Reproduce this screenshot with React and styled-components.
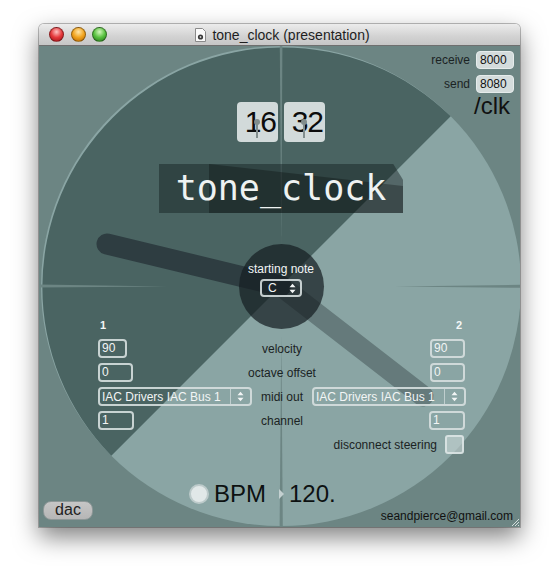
import React from "react";
import styled, { createGlobalStyle } from "styled-components";

const GlobalStyle = createGlobalStyle`
  body {
    margin: 0;
    background: #ffffff;
    font-family: "Liberation Sans", Arial, sans-serif;
  }
`;

const Page = styled.div`
  width: 560px;
  height: 582px;
  padding: 24px 0 0 39px;
  box-sizing: border-box;
  background: #ffffff;
`;

const Window = styled.div`
  width: 481px;
  border-radius: 5px 5px 0 0;
  overflow: hidden;
  box-shadow: 0 10px 24px rgba(0, 0, 0, 0.5), 0 0 0 1px rgba(0, 0, 0, 0.25);
`;

const TitleBar = styled.div`
  height: 21px;
  display: grid;
  grid-template-columns: 1fr auto 1fr;
  align-items: center;
  background: linear-gradient(#ececec, #d2d2d2 60%, #c6c6c6);
  border-bottom: 1px solid #6f6f6f;
`;

const Lights = styled.div`
  display: flex;
  gap: 6.5px;
  padding-left: 10px;
`;

const lightColors = {
  red: ["#ffc2c2", "#e5383b", "#9c1016"],
  orange: ["#ffe6a8", "#f2a41e", "#b36400"],
  green: ["#d4f7bd", "#58c23f", "#25701a"],
};

const Light = styled.span`
  width: 13px;
  height: 13px;
  border-radius: 50%;
  border: 0.5px solid rgba(0, 0, 0, 0.35);
  background: ${(p) =>
    `radial-gradient(circle at 50% 30%, ${lightColors[p.$c][0]} 0%, ${lightColors[p.$c][1]} 50%, ${lightColors[p.$c][2]} 100%)`};
`;

const WindowTitle = styled.div`
  display: flex;
  align-items: center;
  gap: 6px;
  margin-left: 6px;
  font-size: 14px;
  color: #1e1e1e;
`;

const Canvas = styled.div`
  position: relative;
  height: 481px;
  background: #6c8583;
  overflow: hidden;
`;

const Face = styled.svg`
  position: absolute;
  inset: 0;
`;

const Layer = styled.div`
  position: relative;
  height: 100%;
  display: flex;
  flex-direction: column;
  font-size: 12px;
  color: #1b2323;
`;

const Header = styled.div`
  display: grid;
  grid-template-columns: 1fr auto 1fr;
  padding: 5px 6px 0 6px;
`;

const Numbers = styled.div`
  grid-column: 2;
  display: flex;
  gap: 6px;
  margin: 51px 0 0 3px;
`;

const NumberBox = styled.div`
  position: relative;
  width: 41px;
  height: 40px;
  box-sizing: border-box;
  padding-right: 2px;
  border-radius: 4px;
  background: #d2dada;
  text-align: right;
  font-size: 30px;
  letter-spacing: -1px;
  line-height: 40px;
  color: #0c0c0c;
`;

const Pin = styled.span`
  position: absolute;
  left: 19px;
  top: 18px;
  width: 2px;
  height: 18px;
  background: #818d8d;
  &::before {
    content: "";
    position: absolute;
    left: -2px;
    top: -1px;
    width: 6px;
    height: 6px;
    border-radius: 50%;
    background: #818d8d;
  }
`;

const Remote = styled.div`
  grid-column: 3;
  justify-self: end;
  display: flex;
  flex-direction: column;
  align-items: flex-end;
  gap: 6px;
`;

const RemoteRow = styled.div`
  display: flex;
  align-items: center;
  gap: 6px;
`;

const PortField = styled.div`
  width: 38px;
  height: 18px;
  box-sizing: border-box;
  padding-left: 3px;
  border: 1px solid #e6ecec;
  border-radius: 4px;
  background: #d4dcdc;
  line-height: 16px;
  color: #111;
`;

const Address = styled.div`
  margin: -5px 4px 0 0;
  font-size: 24px;
  line-height: 24px;
  color: #111;
`;

const TitlePanel = styled.div`
  position: relative;
  align-self: center;
  margin: 22px 0 0 3px;
  width: 244px;
  height: 49px;
  background: rgba(18, 28, 30, 0.45);
  clip-path: polygon(0 0, 96% 0, 100% 32%, 100% 100%, 0 100%);
  &::before {
    content: "";
    position: absolute;
    left: 50px;
    right: 0;
    top: 0;
    bottom: 0;
    background: rgba(0, 0, 0, 0.28);
    clip-path: polygon(0 0, 100% 45%, 100% 100%, 0 100%);
  }
`;

const TitleText = styled.div`
  position: relative;
  font-family: "DejaVu Sans Mono", "Liberation Mono", monospace;
  font-size: 35px;
  line-height: 49px;
  text-align: center;
  color: #eef2f2;
`;

const NoteBlock = styled.div`
  align-self: center;
  margin: 49px 0 0 3px;
  display: flex;
  flex-direction: column;
  align-items: center;
  gap: 3px;
  color: #f2f5f5;
  line-height: 14px;
`;

const Select = styled.div`
  display: flex;
  align-items: center;
  justify-content: space-between;
  width: ${(p) => p.$w}px;
  height: ${(p) => p.$h}px;
  box-sizing: border-box;
  padding-left: ${(p) => (p.$compact ? 6 : 2)}px;
  border: 2px solid rgba(214, 223, 223, 0.9);
  border-radius: 4px;
  color: #f2f5f5;
  line-height: 14px;
  white-space: nowrap;
`;

const ArrowCell = styled.span`
  display: flex;
  align-items: center;
  justify-content: center;
  width: ${(p) => (p.$divided ? 19 : 14)}px;
  align-self: stretch;
  border-left: ${(p) => (p.$divided ? "1.5px solid rgba(214,223,223,0.7)" : "none")};
`;

const ChannelHead = styled.div`
  display: flex;
  justify-content: space-between;
  margin: 22px 0 8px 61px;
  width: 362px;
  font-size: 11px;
  font-weight: bold;
  line-height: 12px;
  color: #f4f7f7;
`;

const Controls = styled.div`
  display: grid;
  grid-template-columns: 154px 60px 154px;
  grid-auto-rows: 19px;
  row-gap: 5px;
  margin-left: 59px;
  align-items: center;
`;

const Field = styled.div`
  justify-self: ${(p) => (p.$right ? "end" : "start")};
  margin-right: ${(p) => (p.$right ? 1 : 0)}px;
  width: ${(p) => p.$w}px;
  height: 19px;
  box-sizing: border-box;
  padding-left: 2px;
  border: 2px solid rgba(214, 223, 223, 0.9);
  border-radius: 4px;
  color: #f2f5f5;
  line-height: 15px;
`;

const Label = styled.div`
  justify-self: center;
  white-space: nowrap;
  color: #1b2323;
`;

const SteeringRow = styled.div`
  grid-column: 1 / -1;
  justify-self: end;
  display: flex;
  align-items: center;
  gap: 8px;
  margin-right: 2px;
`;

const Check = styled.div`
  width: 19px;
  height: 19px;
  box-sizing: border-box;
  border: 2px solid rgba(222, 230, 230, 0.85);
  border-radius: 3px;
  background: rgba(200, 214, 214, 0.6);
`;

const Bottom = styled.div`
  margin-top: auto;
  height: 43px;
  box-sizing: border-box;
  display: flex;
  align-items: flex-end;
  padding: 0 7px 7px 4px;
`;

const DacButton = styled.div`
  width: 50px;
  height: 19px;
  box-sizing: border-box;
  border: 1.5px solid #8e9898;
  border-radius: 8px;
  background: linear-gradient(#c6c6c6, #b6b6b6);
  text-align: center;
  font-size: 16px;
  line-height: 16px;
  color: #222;
`;

const Tempo = styled.div`
  align-self: flex-start;
  display: flex;
  align-items: center;
  margin-left: 96px;
  font-size: 24px;
  line-height: 20px;
  color: #0d1111;
`;

const Toggle = styled.span`
  width: 20px;
  height: 20px;
  box-sizing: border-box;
  border-radius: 50%;
  border: 2px solid #bccaca;
  background: #e1e8e8;
  margin-right: 5px;
`;

const Triangle = styled.span`
  width: 0;
  height: 0;
  margin: 0 5px 0 13px;
  border-top: 5px solid transparent;
  border-bottom: 5px solid transparent;
  border-left: 5px solid #c3d0d0;
`;

const Email = styled.div`
  margin: 0 0 -3px auto;
  font-size: 12px;
  line-height: 14px;
  color: #111;
`;

const Grip = styled.svg`
  position: absolute;
  right: 0;
  bottom: 0;
`;

const Arrows = () => (
  <svg width="7" height="11" viewBox="0 0 7 11">
    <path d="M0.5 4.2 L3.5 0.8 L6.5 4.2 Z M0.5 6.8 L3.5 10.2 L6.5 6.8 Z" fill="#f2f5f5" />
  </svg>
);

const DocIcon = () => (
  <svg width="11" height="14" viewBox="0 0 11 14">
    <path d="M0.5 0.5 H7.5 L10.5 3.5 V13.5 H0.5 Z" fill="#fafafa" stroke="#8a8a8a" />
    <circle cx="5.5" cy="9" r="2.6" fill="#3a3a3a" />
    <circle cx="5.5" cy="9" r="0.9" fill="#cfcfcf" />
  </svg>
);

const ClockFace = () => (
  <Face width="481" height="481" viewBox="0 0 481 481">
    <circle cx="242" cy="240" r="240" fill="#8aa5a4" />
    <path d="M242 240 L411.7 70.3 A240 240 0 0 0 72.3 409.7 Z" fill="#4a6462" />
    <polygon points="240.8,0 243.4,0 242.3,200" fill="#6c8583" />
    <polygon points="242.3,290 240.6,481 243.8,481" fill="#6c8583" />
    <polygon points="0,238.6 0,241.6 128,240.4" fill="#6c8583" />
    <polygon points="481,238.8 481,241.8 356,240.6" fill="#6c8583" />
    <line x1="68" y1="198" x2="242" y2="240" stroke="#2e3d41" strokeWidth="21" strokeLinecap="round" />
    <line x1="242" y1="240" x2="384" y2="350" stroke="rgba(28,42,45,0.34)" strokeWidth="21" strokeLinecap="round" />
    <circle cx="242.5" cy="240.5" r="42.5" fill="rgba(22,30,34,0.72)" />
  </Face>
);

const rows = [
  { left: 29, label: "velocity", value: "90", right: 35 },
  { left: 35, label: "octave offset", value: "0", right: 35 },
  { select: true, label: "midi out" },
  { left: 36, label: "channel", value: "1", right: 36 },
];

const App = () => {
  return (
    <Page>
      <GlobalStyle />
      <Window>
        <TitleBar>
          <Lights>
            <Light $c="red" />
            <Light $c="orange" />
            <Light $c="green" />
          </Lights>
          <WindowTitle>
            <DocIcon />
            tone_clock (presentation)
          </WindowTitle>
        </TitleBar>
        <Canvas>
          <ClockFace />
          <Layer>
            <Header>
              <Numbers>
                <NumberBox>
                  16
                  <Pin />
                </NumberBox>
                <NumberBox>
                  32
                  <Pin />
                </NumberBox>
              </Numbers>
              <Remote>
                <RemoteRow>
                  receive <PortField>8000</PortField>
                </RemoteRow>
                <RemoteRow>
                  send <PortField>8080</PortField>
                </RemoteRow>
                <Address>/clk</Address>
              </Remote>
            </Header>

            <TitlePanel>
              <TitleText>tone_clock</TitleText>
            </TitlePanel>

            <NoteBlock>
              starting note
              <Select $w={42} $h={18} $compact>
                C
                <ArrowCell>
                  <Arrows />
                </ArrowCell>
              </Select>
            </NoteBlock>

            <ChannelHead>
              <span>1</span>
              <span>2</span>
            </ChannelHead>
            <Controls>
              {rows.map((r) =>
                r.select ? (
                  <React.Fragment key={r.label}>
                    <Select $w={154} $h={19}>
                      IAC Drivers IAC Bus 1
                      <ArrowCell $divided>
                        <Arrows />
                      </ArrowCell>
                    </Select>
                    <Label>{r.label}</Label>
                    <Select $w={154} $h={19}>
                      IAC Drivers IAC Bus 1
                      <ArrowCell $divided>
                        <Arrows />
                      </ArrowCell>
                    </Select>
                  </React.Fragment>
                ) : (
                  <React.Fragment key={r.label}>
                    <Field $w={r.left}>{r.value}</Field>
                    <Label>{r.label}</Label>
                    <Field $w={r.right} $right>
                      {r.value}
                    </Field>
                  </React.Fragment>
                )
              )}
              <SteeringRow>
                disconnect steering
                <Check />
              </SteeringRow>
            </Controls>

            <Bottom>
              <DacButton>dac</DacButton>
              <Tempo>
                <Toggle />
                BPM
                <Triangle />
                120.
              </Tempo>
              <Email>seandpierce@gmail.com</Email>
            </Bottom>
          </Layer>
          <Grip width="10" height="10" viewBox="0 0 10 10">
            <path d="M9 2 L2 9 M9 5 L5 9 M9 8 L8 9" stroke="#d4dddd" strokeWidth="1" />
          </Grip>
        </Canvas>
      </Window>
    </Page>
  );
};

export default App;
